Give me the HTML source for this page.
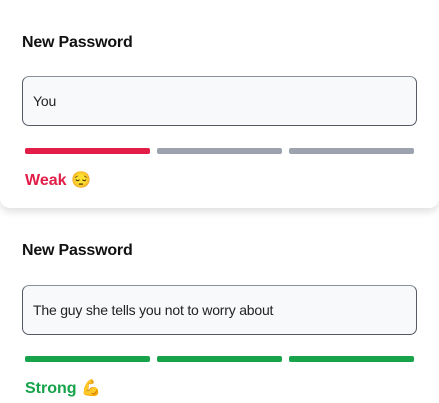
<!DOCTYPE html>
<html><head><style>
body{margin:0;width:439px;height:403px;background:#fff;font-family:"Liberation Sans",sans-serif;position:relative;overflow:hidden}
.card{position:absolute;left:0;top:-20px;width:439px;height:228px;background:#fff;border-radius:10px;box-shadow:0 4px 8px rgba(0,0,0,.12)}
.lbl{position:absolute;left:22px;font-weight:bold;font-size:16px;color:#111;letter-spacing:-0.2px}
.inp{position:absolute;left:22px;width:395px;height:50px;border:1px solid #555a66;border-top-color:#8a8f99;border-radius:7px;background:#f8f9fb;box-sizing:border-box;font-size:14px;color:#222;padding-left:10px;line-height:48px;letter-spacing:-0.2px}
.bar{position:absolute;height:6px;border-radius:2px}
.st{position:absolute;left:25px;font-weight:bold;font-size:16px}
</style></head><body>
<div class="card"></div>
<div class="lbl" style="top:34px">New Password</div>
<div class="inp" style="top:76px">You</div>
<div class="bar" style="left:25px;top:148px;width:125px;background:#e11d48"></div>
<div class="bar" style="left:157px;top:148px;width:125px;background:#9ca3af"></div>
<div class="bar" style="left:289px;top:148px;width:125px;background:#9ca3af"></div>
<div class="st" style="top:170px;color:#e11d48">Weak 😔</div>
<div class="lbl" style="top:242px">New Password</div>
<div class="inp" style="top:285px">The guy she tells you not to worry about</div>
<div class="bar" style="left:25px;top:356px;width:125px;background:#16a34a"></div>
<div class="bar" style="left:157px;top:356px;width:125px;background:#16a34a"></div>
<div class="bar" style="left:289px;top:356px;width:125px;background:#16a34a"></div>
<div class="st" style="top:378px;color:#16a34a">Strong 💪</div>
</body></html>
